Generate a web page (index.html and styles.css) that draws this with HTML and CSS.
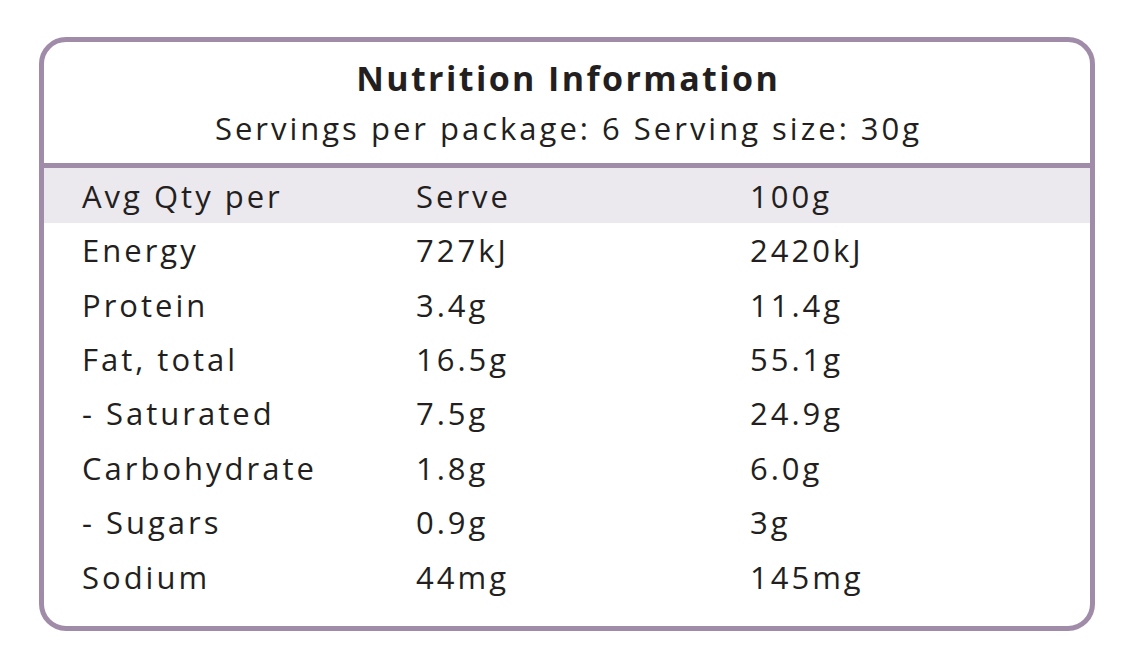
FILE: index.html
```html
<!DOCTYPE html>
<html lang="en">
<head>
<meta charset="utf-8">
<title>Nutrition Information</title>
<link rel="stylesheet" href="styles.css">
</head>
<body>
<div class="label">
  <header class="label-head">
    <h1 class="title">Nutrition Information</h1>
    <p class="subtitle">Servings per package: 6 Serving size: 30g</p>
  </header>
  <div class="table">
    <div class="row row-head"><span>Avg Qty per</span><span>Serve</span><span>100g</span></div>
    <div class="row"><span>Energy</span><span>727kJ</span><span>2420kJ</span></div>
    <div class="row"><span>Protein</span><span>3.4g</span><span>11.4g</span></div>
    <div class="row"><span>Fat, total</span><span>16.5g</span><span>55.1g</span></div>
    <div class="row"><span>- Saturated</span><span>7.5g</span><span>24.9g</span></div>
    <div class="row"><span>Carbohydrate</span><span>1.8g</span><span>6.0g</span></div>
    <div class="row"><span>- Sugars</span><span>0.9g</span><span>3g</span></div>
    <div class="row"><span>Sodium</span><span>44mg</span><span>145mg</span></div>
  </div>
</div>
</body>
</html>
```

FILE: styles.css
```css
* { box-sizing: border-box; }
html, body { margin: 0; padding: 0; background: #ffffff; }
body {
  font-family: "Open Sans", "Noto Sans", sans-serif;
  color: #231f20;
  width: 1146px;
  height: 660px;
  overflow: hidden;
}
.label {
  margin: 37px 0 0 39px;
  width: 1056px;
  height: 594px;
  border: 5px solid #a08ca8;
  border-radius: 27px;
  overflow: hidden;
}
.label-head {
  height: 121px;
  display: flex;
  flex-direction: column;
  align-items: center;
  padding-top: 14px;
}
.title {
  margin: 0;
  font-size: 34px;
  font-weight: 700;
  line-height: 44px;
  letter-spacing: 2.4px;
  padding-left: 2.4px;
}
.subtitle {
  margin: 7px 0 0;
  font-size: 31px;
  font-weight: 400;
  line-height: 42px;
  letter-spacing: 3px;
  padding-left: 3px;
}
.table {
  border-top: 5px solid #a08ca8;
}
.row {
  display: grid;
  grid-template-columns: 334px 334px 1fr;
  padding-left: 38px;
  height: 54.4px;
  align-items: center;
  font-size: 31px;
  line-height: 40px;
  letter-spacing: 3px;
}
.row-head {
  background: #ebe8ee;
  height: 55px;
}
```
